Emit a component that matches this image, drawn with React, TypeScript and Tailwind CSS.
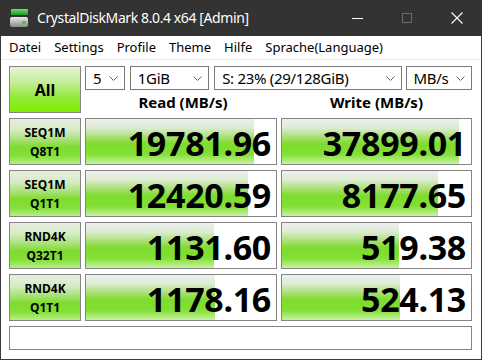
import React from 'react';

const rows = [
  { l1: 'SEQ1M', l2: 'Q8T1', read: '19781.96', rw: 168, write: '37899.01', ww: 177 },
  { l1: 'SEQ1M', l2: 'Q1T1', read: '12420.59', rw: 162, write: '8177.65', ww: 156 },
  { l1: 'RND4K', l2: 'Q32T1', read: '1131.60', rw: 128, write: '519.38', ww: 117 },
  { l1: 'RND4K', l2: 'Q1T1', read: '1178.16', rw: 129, write: '524.13', ww: 118 },
];

const menu = ['Datei', 'Settings', 'Profile', 'Theme', 'Hilfe', 'Sprache(Language)'];

function Chevron() {
  return (
    <svg width="9" height="5" viewBox="0 0 9 5" className="shrink-0">
      <path d="M0.5 0.5 L4.5 4.5 L8.5 0.5" fill="none" stroke="#666" strokeWidth="1" />
    </svg>
  );
}

function Combo({ text, w }: { text: string; w: string }) {
  return (
    <div className={`flex h-[24px] items-center justify-between border border-[#7a7a7a] bg-white pl-[7px] pr-[6px] ${w}`}>
      <span className="text-[15px] leading-none tracking-[-0.3px] text-black">{text}</span>
      <Chevron />
    </div>
  );
}

function Cell({ value, bar }: { value: string; bar: number }) {
  return (
    <div
      className="flex h-[47px] items-center justify-end border border-[#858585] bg-white bg-no-repeat bg-[linear-gradient(180deg,#efefef_0%,#dcecd0_20%,#a8e074_40%,#7edc2e_55%,#82e034_78%,#c8f2a4_100%)] pr-[5px] pt-[3px]"
      style={{ backgroundSize: `${bar}px 100%` }}
    >
      <span className="text-[34px] font-bold leading-none tracking-[-0.3px] text-black">{value}</span>
    </div>
  );
}

export default function App() {
  return (
    <div className="flex h-[360px] w-[482px] flex-col bg-[#3c3c3c] font-['Noto_Sans',sans-serif]">
      {/* title bar */}
      <div className="flex h-[36px] shrink-0 items-center bg-[#333333] text-white">
        <svg width="19" height="19" viewBox="0 0 19 19" className="ml-[10px]">
          <defs>
            <linearGradient id="g1" x1="0" y1="0" x2="0" y2="1">
              <stop offset="0" stopColor="#6ee05a" />
              <stop offset="1" stopColor="#1a9a2a" />
            </linearGradient>
            <linearGradient id="g2" x1="0" y1="0" x2="0" y2="1">
              <stop offset="0" stopColor="#e8e8e8" />
              <stop offset="1" stopColor="#8a8a8a" />
            </linearGradient>
          </defs>
          <rect x="1" y="0" width="17" height="6" rx="1" fill="url(#g1)" />
          <rect x="0" y="8" width="18" height="10" rx="2" fill="url(#g2)" />
          <rect x="12" y="12" width="4" height="3" fill="#3bd24a" />
        </svg>
        <span className="ml-[8px] text-[14px] leading-none tracking-[-0.4px]">CrystalDiskMark 8.0.4 x64 [Admin]</span>
        <div className="ml-auto flex h-full items-center">
          <div className="flex h-full w-[46px] items-center justify-center">
            <div className="h-[1px] w-[11px] bg-white" />
          </div>
          <div className="ml-[4px] flex h-full w-[46px] items-center justify-center">
            <div className="h-[10px] w-[10px] border border-[#6a6a6a]" />
          </div>
          <div className="ml-[4px] mr-[2px] flex h-full w-[46px] items-center justify-center">
            <svg width="12" height="12" viewBox="0 0 12 12">
              <path d="M0.5 0.5 L11.5 11.5 M11.5 0.5 L0.5 11.5" stroke="#fff" strokeWidth="1.1" />
            </svg>
          </div>
        </div>
      </div>

      {/* window body */}
      <div className="mx-[1px] mb-[1px] flex flex-1 flex-col bg-white">
        <div className="flex h-[24px] items-center gap-[13px] border-b border-[#eeeeee] pl-[8px] text-[13px] text-black">
          {menu.map((m) => (
            <span key={m}>{m}</span>
          ))}
        </div>

        <div className="grid grid-cols-[72px_192px_191px] gap-x-[4px] gap-y-[5px] pl-[8px] pt-[6px]">
          <div className="flex h-[47px] items-center justify-center border border-[#858585] bg-[linear-gradient(180deg,#e6f4d8_0%,#c4ec98_35%,#96ea40_65%,#80ec00_100%)] text-[16px] font-bold text-black">
            All
          </div>
          <div className="col-span-2 flex h-[47px] flex-col">
            <div className="flex gap-[5px]">
              <Combo text="5" w="w-[40px]" />
              <Combo text="1GiB" w="w-[80px]" />
              <Combo text="S: 23% (29/128GiB)" w="w-[189px]" />
              <Combo text="MB/s" w="w-[67px] ml-[-1px]" />
            </div>
            <div className="flex flex-1 items-center pt-[1px] text-[15px] font-bold text-black">
              <div className="w-[196px] text-center">Read (MB/s)</div>
              <div className="w-[191px] text-center">Write (MB/s)</div>
            </div>
          </div>

          {rows.map((r, i) => (
            <React.Fragment key={i}>
              <div className="flex h-[47px] flex-col items-center justify-center border border-[#858585] bg-[linear-gradient(180deg,#e8ece4_0%,#d4ecc0_25%,#a4e070_48%,#7edc2e_62%,#84e038_82%,#b8ee88_100%)] text-[12px] font-bold leading-[19px] text-black">
                <span>{r.l1}</span>
                <span>{r.l2}</span>
              </div>
              <Cell value={r.read} bar={r.rw} />
              <Cell value={r.write} bar={r.ww} />
            </React.Fragment>
          ))}

          <div className="col-span-3 h-[24px] border border-[#858585] bg-white" />
        </div>
      </div>
    </div>
  );
}
